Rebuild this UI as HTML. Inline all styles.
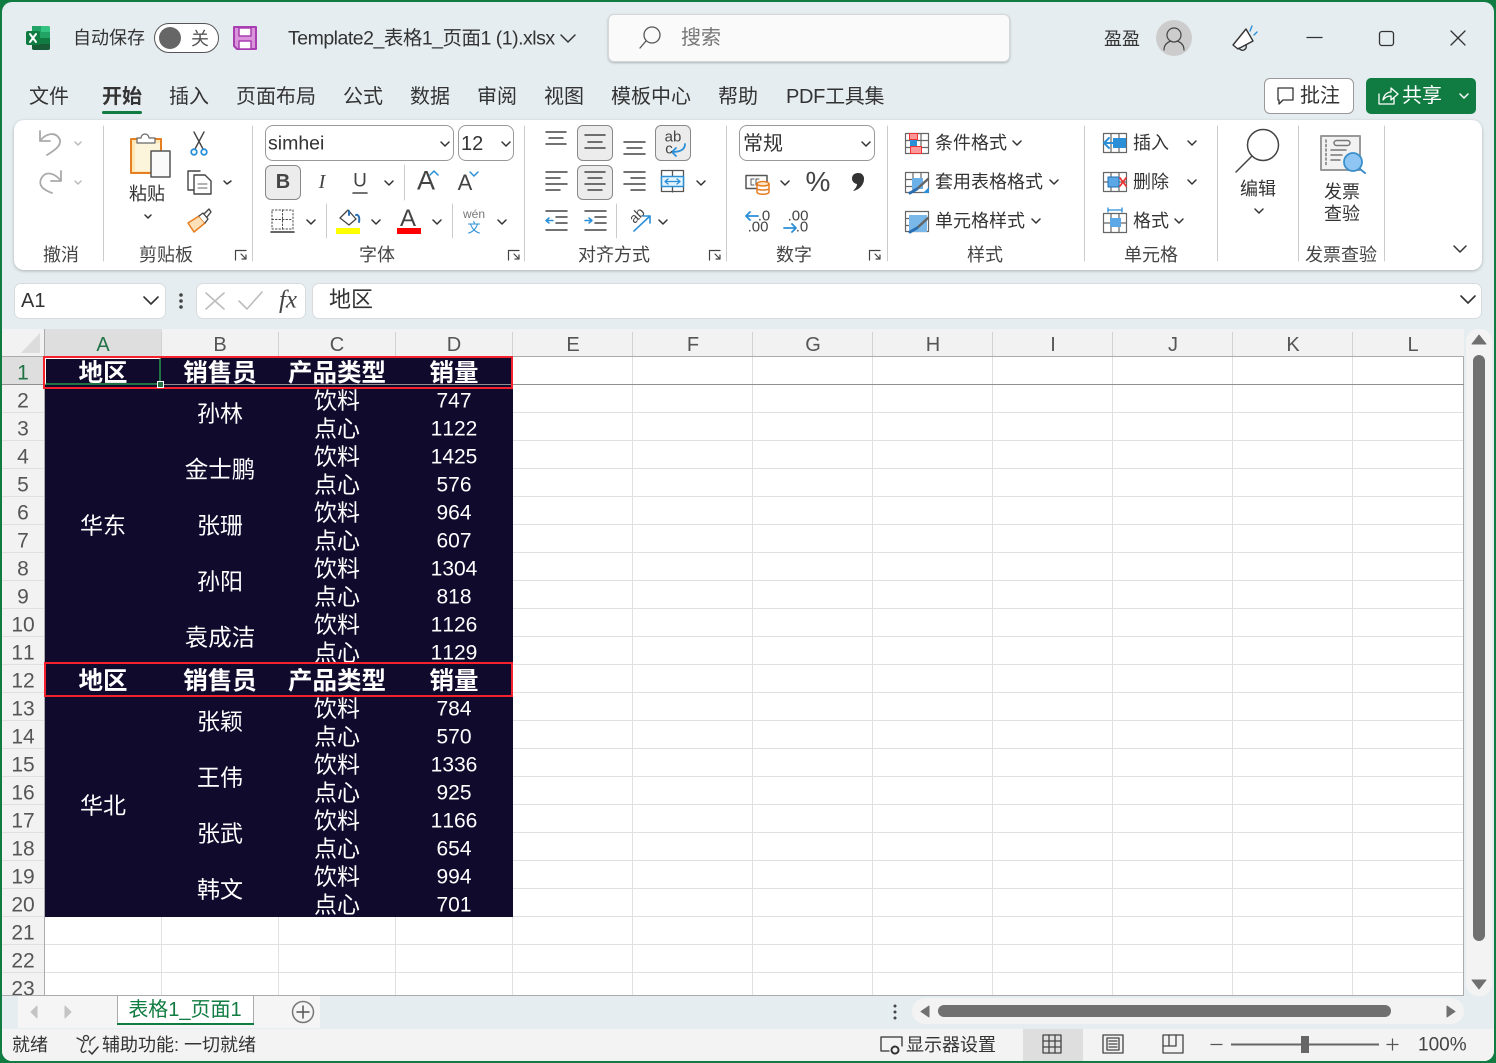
<!DOCTYPE html>
<html lang="zh"><head><meta charset="utf-8"><title>Excel</title>
<style>
html,body{margin:0;padding:0;width:1496px;height:1063px;overflow:hidden;background:#107c41}
body{position:relative;font-family:"Liberation Sans","Noto Sans CJK SC",sans-serif;color:#333}
#win{position:absolute;left:2px;top:2px;width:1492px;height:1059px;background:#e5edf0;border-radius:10px;overflow:hidden}
.abs{position:absolute}
#ov{position:absolute;left:0;top:0;width:1496px;height:1063px}
.t,.c{position:absolute;white-space:nowrap;line-height:1;font-size:18px;margin-top:1px;z-index:2}
.t{transform:translateY(-50%)}
.c{transform:translate(-50%,-50%)}
.w{color:#fff;font-size:23px}
.b{color:#fff;font-size:24.500px;font-weight:bold}
.r{font-size:21px;color:#555;font-kerning:none}
.h{font-size:20px;color:#555}
.tab{font-size:20px;color:#333}
.g{font-size:18px;color:#444}
.n{font-size:21px;color:#fff;font-kerning:none}
.z1{z-index:0}
</style></head><body>
<div id="win"></div>

<!-- ribbon and boxes -->
<div class="abs" style="left:14px;top:120px;width:1468px;height:150px;background:#fff;border-radius:10px;box-shadow:0 1px 3px rgba(0,0,0,.25)"></div>
<div class="abs" style="left:608px;top:14px;width:400px;height:46px;background:#fafafa;border:1px solid #d5d8da;border-radius:6px;box-shadow:0 1px 2px rgba(0,0,0,.25)"></div>
<div class="abs" style="left:1264px;top:78px;width:88px;height:34px;background:#fff;border:1px solid #999;border-radius:6px"></div>
<div class="abs" style="left:1366px;top:78px;width:110px;height:36px;background:#107c41;border-radius:5px"></div>
<div class="abs" style="left:102px;top:111px;width:40px;height:3px;background:#107c41;border-radius:2px"></div>
<div class="abs" style="left:14px;top:283px;width:150px;height:34px;background:#fff;border:1px solid #d8dcde;border-radius:7px"></div>
<div class="abs" style="left:196px;top:283px;width:108px;height:34px;background:#fff;border:1px solid #d8dcde;border-radius:7px"></div>
<div class="abs" style="left:312px;top:283px;width:1168px;height:34px;background:#fff;border:1px solid #d8dcde;border-radius:7px"></div>
<div class="abs" style="left:265px;top:125px;width:187px;height:34px;background:#fff;border:1px solid #999;border-radius:8px"></div>
<div class="abs" style="left:458px;top:125px;width:54px;height:34px;background:#fff;border:1px solid #999;border-radius:8px"></div>
<div class="abs" style="left:739px;top:125px;width:134px;height:34px;background:#fff;border:1px solid #999;border-radius:8px"></div>
<div class="abs" style="left:265px;top:165px;width:34px;height:33px;background:#ececec;border:1px solid #888;border-radius:6px"></div>
<div class="abs" style="left:577px;top:125px;width:34px;height:34px;background:#ececec;border:1px solid #888;border-radius:6px"></div>
<div class="abs" style="left:655px;top:125px;width:34px;height:34px;background:#ececec;border:1px solid #888;border-radius:6px"></div>
<div class="abs" style="left:577px;top:165px;width:34px;height:33px;background:#ececec;border:1px solid #888;border-radius:6px"></div>

<!-- sheet base -->
<div class="abs" style="left:2px;top:329px;width:1462px;height:28px;background:#f2f2f2"></div>
<div class="abs" style="left:2px;top:357px;width:43px;height:640px;background:#f2f2f2"></div>
<div class="abs" style="left:45px;top:329px;width:117px;height:28px;background:#dedede"></div>
<div class="abs" style="left:2px;top:357px;width:43px;height:28px;background:#dedede"></div>
<div class="abs" style="left:45px;top:357px;width:1418px;height:640px;background:#fff"></div>
<div class="abs" style="left:1466px;top:329px;width:26px;height:667px;background:#f3f3f3;border-radius:12px"></div>

<svg class="abs" style="left:0;top:0" width="1496" height="1063" fill="none">
<g stroke="#e0e0e0" stroke-width="1">
<path d="M161.500 357V995M278.500 357V995M395.500 357V995M512.500 357V995M632.500 357V995M752.500 357V995M872.500 357V995M992.500 357V995M1112.500 357V995M1232.500 357V995M1352.500 357V995"/>
<path d="M2 412.500H1463M2 440.500H1463M2 468.500H1463M2 496.500H1463M2 524.500H1463M2 552.500H1463M2 580.500H1463M2 608.500H1463M2 636.500H1463M2 664.500H1463M2 692.500H1463M2 720.500H1463M2 748.500H1463M2 776.500H1463M2 804.500H1463M2 832.500H1463M2 860.500H1463M2 888.500H1463M2 916.500H1463M2 944.500H1463M2 972.500H1463"/>
<path d="M161.500 332V356M278.500 332V356M395.500 332V356M512.500 332V356M632.500 332V356M752.500 332V356M872.500 332V356M992.500 332V356M1112.500 332V356M1232.500 332V356M1352.500 332V356" stroke="#d2d2d2"/>
</g>
<path d="M44.500 329V995M2 356.500H1463.500V995" stroke="#ababab"/>
<path d="M40 333V353H21Z" fill="#dcdcdc"/>
</svg>

<!-- dark data -->
<div class="abs" style="left:45px;top:357px;width:468px;height:560px;background:#100a2d"></div>
<div class="abs" style="left:2px;top:384px;width:1462px;height:1px;background:#8f8f8f"></div>

<!-- col letters -->
<div class="c h" style="left:103px;top:344px;color:#217346">A</div>
<div class="c h" style="left:220px;top:344px">B</div>
<div class="c h" style="left:337px;top:344px">C</div>
<div class="c h" style="left:454px;top:344px">D</div>
<div class="c h" style="left:573px;top:344px">E</div>
<div class="c h" style="left:693px;top:344px">F</div>
<div class="c h" style="left:813px;top:344px">G</div>
<div class="c h" style="left:933px;top:344px">H</div>
<div class="c h" style="left:1053px;top:344px">I</div>
<div class="c h" style="left:1173px;top:344px">J</div>
<div class="c h" style="left:1293px;top:344px">K</div>
<div class="c h" style="left:1413px;top:344px">L</div>

<!-- row numbers -->
<div class="c r" style="left:23px;top:372px;color:#217346">1</div>
<div class="c r" style="left:23px;top:400px">2</div>
<div class="c r" style="left:23px;top:428px">3</div>
<div class="c r" style="left:23px;top:456px">4</div>
<div class="c r" style="left:23px;top:484px">5</div>
<div class="c r" style="left:23px;top:512px">6</div>
<div class="c r" style="left:23px;top:540px">7</div>
<div class="c r" style="left:23px;top:568px">8</div>
<div class="c r" style="left:23px;top:596px">9</div>
<div class="c r" style="left:23px;top:624px">10</div>
<div class="c r" style="left:23px;top:652px">11</div>
<div class="c r" style="left:23px;top:680px">12</div>
<div class="c r" style="left:23px;top:708px">13</div>
<div class="c r" style="left:23px;top:736px">14</div>
<div class="c r" style="left:23px;top:764px">15</div>
<div class="c r" style="left:23px;top:792px">16</div>
<div class="c r" style="left:23px;top:820px">17</div>
<div class="c r" style="left:23px;top:848px">18</div>
<div class="c r" style="left:23px;top:876px">19</div>
<div class="c r" style="left:23px;top:904px">20</div>
<div class="c r" style="left:23px;top:932px">21</div>
<div class="c r" style="left:23px;top:960px">22</div>
<div class="c r z1" style="left:23px;top:988px">23</div>

<!-- merged cells -->
<div class="c w" style="left:103px;top:525px">华东</div>
<div class="c w" style="left:103px;top:805px">华北</div>
<div class="c w" style="left:220px;top:413px">孙林</div>
<div class="c w" style="left:220px;top:469px;font-size:23.500px">金士鹏</div>
<div class="c w" style="left:220px;top:525px">张珊</div>
<div class="c w" style="left:220px;top:581px">孙阳</div>
<div class="c w" style="left:220px;top:637px;font-size:23.500px">袁成洁</div>
<div class="c w" style="left:220px;top:721px">张颖</div>
<div class="c w" style="left:220px;top:777px">王伟</div>
<div class="c w" style="left:220px;top:833px">张武</div>
<div class="c w" style="left:220px;top:889px">韩文</div>

<!-- C/D -->
<div class="c w" style="left:337px;top:400px">饮料</div><div class="c n" style="left:454px;top:400px">747</div>
<div class="c w" style="left:337px;top:428px">点心</div><div class="c n" style="left:454px;top:428px">1122</div>
<div class="c w" style="left:337px;top:456px">饮料</div><div class="c n" style="left:454px;top:456px">1425</div>
<div class="c w" style="left:337px;top:484px">点心</div><div class="c n" style="left:454px;top:484px">576</div>
<div class="c w" style="left:337px;top:512px">饮料</div><div class="c n" style="left:454px;top:512px">964</div>
<div class="c w" style="left:337px;top:540px">点心</div><div class="c n" style="left:454px;top:540px">607</div>
<div class="c w" style="left:337px;top:568px">饮料</div><div class="c n" style="left:454px;top:568px">1304</div>
<div class="c w" style="left:337px;top:596px">点心</div><div class="c n" style="left:454px;top:596px">818</div>
<div class="c w" style="left:337px;top:624px">饮料</div><div class="c n" style="left:454px;top:624px">1126</div>
<div class="c w z1" style="left:337px;top:652px">点心</div><div class="c n" style="left:454px;top:652px">1129</div>
<div class="c w" style="left:337px;top:708px">饮料</div><div class="c n" style="left:454px;top:708px">784</div>
<div class="c w" style="left:337px;top:736px">点心</div><div class="c n" style="left:454px;top:736px">570</div>
<div class="c w" style="left:337px;top:764px">饮料</div><div class="c n" style="left:454px;top:764px">1336</div>
<div class="c w" style="left:337px;top:792px">点心</div><div class="c n" style="left:454px;top:792px">925</div>
<div class="c w" style="left:337px;top:820px">饮料</div><div class="c n" style="left:454px;top:820px">1166</div>
<div class="c w" style="left:337px;top:848px">点心</div><div class="c n" style="left:454px;top:848px">654</div>
<div class="c w" style="left:337px;top:876px">饮料</div><div class="c n" style="left:454px;top:876px">994</div>
<div class="c w" style="left:337px;top:904px">点心</div><div class="c n" style="left:454px;top:904px">701</div>

<!-- row 12 band covers clipped text -->
<div class="abs" style="left:44px;top:662px;width:469px;height:35px;background:#100a2d;box-sizing:border-box;border:2px solid #f5222d;z-index:1"></div>
<div class="abs" style="left:45px;top:358px;width:116px;height:27px;box-sizing:border-box;border:1px solid #fff;border-right:2px solid #217346;border-bottom:2px solid #217346"></div>
<div class="abs" style="left:43px;top:356px;width:470px;height:33px;box-sizing:border-box;border:2px solid #f5222d"></div>
<div class="abs" style="left:157px;top:381px;width:7px;height:7px;background:#217346;border:1px solid #fff;box-sizing:border-box"></div>

<div class="c b" style="left:103px;top:373px">地区</div>
<div class="c b" style="left:220px;top:373px">销售员</div>
<div class="c b" style="left:337px;top:373px">产品类型</div>
<div class="c b" style="left:454px;top:373px">销量</div>
<div class="c b" style="left:103px;top:681px">地区</div>
<div class="c b" style="left:220px;top:681px">销售员</div>
<div class="c b" style="left:337px;top:681px">产品类型</div>
<div class="c b" style="left:454px;top:681px">销量</div>

<!-- sheet tab bar / status -->
<div class="abs" style="left:2px;top:996px;width:1492px;height:33px;background:#e5edf0;z-index:1"></div>
<div class="abs" style="left:2px;top:995px;width:1462px;height:1px;background:#ababab;z-index:1"></div>
<div class="abs" style="left:18px;top:996px;width:302px;height:32px;background:#f5f5f5;z-index:1"></div>
<div class="abs" style="left:117px;top:995px;width:137px;height:28px;background:#fff;box-sizing:border-box;border:1px solid #ababab;border-bottom:0;z-index:1"></div>
<div class="abs" style="left:117px;top:1023px;width:137px;height:2px;background:#107c41;z-index:1"></div>
<div class="c" style="left:185px;top:1009px;font-size:20px;color:#107c41">表格1_页面1</div>
<div class="abs" style="left:912px;top:998px;width:552px;height:26px;background:#f3f3f3;border-radius:13px;z-index:1"></div>
<div class="abs" style="left:938px;top:1005px;width:453px;height:12px;background:#707070;border-radius:6px;z-index:1"></div>
<div class="abs" style="left:1473px;top:355px;width:12px;height:586px;background:#707070;border-radius:6px"></div>
<div class="abs" style="left:2px;top:1029px;width:1492px;height:32px;background:#f3f3f3;border-radius:0 0 10px 10px;z-index:1"></div>
<div class="abs" style="left:1023px;top:1029px;width:60px;height:32px;background:#dedede;z-index:1"></div>

<div class="t" style="left:12px;top:1044px;font-size:18px">就绪</div>
<div class="t" style="left:102px;top:1044px;font-size:18px">辅助功能: 一切就绪</div>
<div class="t" style="left:906px;top:1044px;font-size:18px">显示器设置</div>
<div class="t" style="left:1418px;top:1044px;font-size:19px;color:#444">100%</div>

<!-- title text -->
<div class="t" style="left:73px;top:37px">自动保存</div>
<div class="c" style="left:200px;top:38px;font-size:18px;color:#555">关</div>
<div class="t" style="left:288px;top:38px;font-size:19.500px;letter-spacing:-.5px">Template2_表格1_页面1 (1).xlsx</div>
<div class="t" style="left:681px;top:37px;font-size:20px;color:#777">搜索</div>
<div class="t" style="left:1104px;top:38px;font-size:18px">盈盈</div>

<!-- tabs -->
<div class="t tab" style="left:29px;top:96px">文件</div>
<div class="t tab" style="left:102px;top:96px;font-weight:bold">开始</div>
<div class="t tab" style="left:169px;top:96px">插入</div>
<div class="t tab" style="left:236px;top:96px">页面布局</div>
<div class="t tab" style="left:343px;top:96px">公式</div>
<div class="t tab" style="left:410px;top:96px">数据</div>
<div class="t tab" style="left:477px;top:96px">审阅</div>
<div class="t tab" style="left:544px;top:96px">视图</div>
<div class="t tab" style="left:611px;top:96px">模板中心</div>
<div class="t tab" style="left:718px;top:96px">帮助</div>
<div class="t tab" style="left:786px;top:96px;letter-spacing:-.3px">PDF工具集</div>
<div class="t" style="left:1300px;top:95px;font-size:20px">批注</div>
<div class="t" style="left:1402px;top:95px;font-size:20px;color:#fff">共享</div>

<!-- ribbon text -->
<div class="c" style="left:147px;top:193px">粘贴</div>
<div class="t" style="left:268px;top:143px;font-size:19.500px">simhei</div>
<div class="t" style="left:461px;top:143px;font-size:20px">12</div>
<div class="c" style="left:283px;top:181px;font-size:20px;font-weight:bold;color:#444">B</div>
<div class="c" style="left:322px;top:181px;font-size:20px;font-style:italic;font-family:'Liberation Serif',serif;color:#444">I</div>
<div class="c" style="left:360px;top:180px;font-size:19px;color:#444">U</div>
<div class="c" style="left:426px;top:180px;font-size:27px;color:#444">A</div>
<div class="c" style="left:465px;top:182px;font-size:22px;color:#444">A</div>
<div class="c" style="left:408px;top:218px;font-size:24px;color:#444">A</div>
<div class="c" style="left:474px;top:213px;font-size:12px;color:#777">wén</div>
<div class="c" style="left:474px;top:227px;font-size:13px;color:#2b8fd8">文</div>
<div class="c" style="left:673px;top:136px;font-size:15px;color:#444">ab</div>
<div class="c" style="left:669px;top:148px;font-size:15px;color:#444">c</div>
<div class="t" style="left:743px;top:143px;font-size:20px">常规</div>
<div class="c" style="left:818px;top:181px;font-size:28px;color:#444">%</div>
<div class="c" style="left:764px;top:215px;font-size:15px;color:#444">.0</div>
<div class="c" style="left:758px;top:226px;font-size:15px;color:#444">.00</div>
<div class="c" style="left:798px;top:215px;font-size:15px;color:#444">.00</div>
<div class="c" style="left:802px;top:226px;font-size:15px;color:#444">.0</div>
<div class="t" style="left:935px;top:142px">条件格式</div>
<div class="t" style="left:935px;top:181px">套用表格格式</div>
<div class="t" style="left:935px;top:220px">单元格样式</div>
<div class="t" style="left:1133px;top:142px">插入</div>
<div class="t" style="left:1133px;top:181px">删除</div>
<div class="t" style="left:1133px;top:220px">格式</div>
<div class="c" style="left:1258px;top:188px">编辑</div>
<div class="c" style="left:1342px;top:191px">发票</div>
<div class="c" style="left:1342px;top:213px">查验</div>
<div class="c g" style="left:61px;top:254px">撤消</div>
<div class="c g" style="left:166px;top:254px">剪贴板</div>
<div class="c g" style="left:377px;top:254px">字体</div>
<div class="c g" style="left:614px;top:254px">对齐方式</div>
<div class="c g" style="left:794px;top:254px">数字</div>
<div class="c g" style="left:985px;top:254px">样式</div>
<div class="c g" style="left:1151px;top:254px">单元格</div>
<div class="c g" style="left:1341px;top:254px">发票查验</div>

<!-- formula bar -->
<div class="t" style="left:21px;top:300px;font-size:20px">A1</div>
<div class="t" style="left:329px;top:299px;font-size:22px">地区</div>
<div class="c" style="left:288px;top:299px;font-size:25px;font-style:italic;font-family:'Liberation Serif',serif;color:#444">fx</div>

<svg id="ov" fill="none" stroke-linecap="round" stroke-linejoin="round" style="z-index:1">
<!-- excel logo -->
<path d="M32 26H48a2 2 0 0 1 2 2V48a2 2 0 0 1-2 2H34a2 2 0 0 1-2-2Z" fill="#21a366" stroke="none"/>
<path d="M41 26H48a2 2 0 0 1 2 2V32H41Z" fill="#33c481" stroke="none"/>
<path d="M32 38H50V44H32Z" fill="#107c41" stroke="none"/>
<path d="M32 44H50V48a2 2 0 0 1-2 2H34a2 2 0 0 1-2-2Z" fill="#185c37" stroke="none"/>
<rect x="26" y="31" width="14" height="14" rx="2" fill="#107c41"/>
<path d="M30 34L36 42M36 34L30 42" stroke="#fff" stroke-width="2"/>
<!-- toggle -->
<rect x="154.500" y="23.500" width="64" height="29" rx="14.500" fill="#fff" stroke="#555" stroke-width="1"/>
<circle cx="170" cy="38" r="11" fill="#666"/>
<!-- save -->
<path d="M234 27H256V49H237L234 46Z" fill="#d994dc" stroke="#a83fb0" stroke-width="2"/>
<rect x="239" y="28" width="12" height="8" fill="#fff" stroke="#a83fb0" stroke-width="1.500"/>
<rect x="239" y="41" width="12" height="8" fill="#fff" stroke="#a83fb0" stroke-width="1.500"/>
<path d="M561 35L568 42L575 35" stroke="#333" stroke-width="1.500"/>
<!-- search icon -->
<circle cx="652" cy="35" r="8" stroke="#555" stroke-width="1.300"/>
<path d="M646 41L640 48" stroke="#555" stroke-width="1.300"/>
<!-- avatar -->
<circle cx="1174" cy="38" r="18" fill="#ccc"/>
<circle cx="1174" cy="35" r="7" stroke="#444" stroke-width="1.200"/>
<path d="M1164 50C1164 44 1168 42 1171 41M1184 50C1184 44 1180 42 1177 41" stroke="#444" stroke-width="1.200"/>
<!-- megaphone -->
<path d="M1246 29L1253 41L1238 49L1233 45Z" fill="#fff" stroke="#333" stroke-width="1.400"/>
<path d="M1239 48A3.500 3.500 0 0 0 1246 45" stroke="#333" stroke-width="1.400"/>
<path d="M1250 31L1252 26M1254 35L1257 32" stroke="#2b8fd8" stroke-width="1.400"/>
<!-- window controls -->
<path d="M1307 37.500H1322" stroke="#333" stroke-width="1.300"/>
<rect x="1379.500" y="31.500" width="14" height="14" rx="2.500" stroke="#333" stroke-width="1.300"/>
<path d="M1451 31L1465 45M1465 31L1451 45" stroke="#333" stroke-width="1.300"/>
<!-- comment / share -->
<path d="M1278 88H1293V100H1283L1279 104V100H1278Z" stroke="#333" stroke-width="1.300"/>
<path d="M1379 94V104H1394V98M1383 100C1384 94 1388 92 1391 92V88L1398 94L1391 100V96C1388 96 1385 97 1383 100Z" stroke="#fff" stroke-width="1.300"/>
<path d="M1460 94L1464 98L1468 94" stroke="#fff" stroke-width="1.500"/>

<!-- separators -->
<path d="M103.500 126V261M252.500 126V261M524.500 126V261M726.500 126V261M887.500 126V261M1084.500 126V261M1217.500 126V261M1298.500 126V261M1384.500 126V261M404.500 165V200M326.500 204V238M452.500 204V238M616.500 204V238" stroke="#ccc" stroke-width="1"/>

<!-- undo/redo -->
<path d="M40 131V141H50M40 141C46 133 56 131 60 140C61 146 55 150 47 155" stroke="#aaa" stroke-width="1.800"/>
<path d="M61 171V181H51M61 181C55 173 45 170 41 179C38 186 44 190 52 193" stroke="#aaa" stroke-width="1.800"/>
<path d="M75 142L78 145L81 142M75 181L78 184L81 181" stroke="#bbb" stroke-width="1.500"/>

<!-- paste -->
<rect x="131" y="139" width="30" height="34" fill="#fde7b4" stroke="#e67e22" stroke-width="2"/>
<rect x="135" y="143" width="25" height="28" fill="#fdf4dc"/>
<path d="M137 138H141A4 4 0 0 1 149 138H155V143H137Z" fill="#fff" stroke="#666" stroke-width="1.200"/>
<rect x="151" y="151" width="19" height="26" fill="#fafafa" stroke="#555" stroke-width="1.500"/>
<path d="M145 215L148 218L151 215" stroke="#333" stroke-width="1.500"/>
<!-- scissors -->
<path d="M194 132L203 149M204 132L195 149" stroke="#444" stroke-width="1.400"/>
<circle cx="194" cy="152" r="2.800" stroke="#2b8fd8" stroke-width="1.800"/>
<circle cx="204" cy="152" r="2.800" stroke="#2b8fd8" stroke-width="1.800"/>
<!-- copy -->
<path d="M194 190H188V171H200" stroke="#444" stroke-width="1.400"/>
<path d="M194 175H205L211 181V194H194Z" fill="#fff" stroke="#444" stroke-width="1.400"/>
<path d="M198 184H207M198 188H207" stroke="#666"/>
<path d="M224 181L227 184L231 181" stroke="#333" stroke-width="1.500"/>
<!-- painter -->
<path d="M188 223L199 216L205 223L194 232Z" fill="#fde0b8" stroke="#e67e22" stroke-width="1.500"/>
<path d="M199 216L203 213L208 219L205 223" fill="#fff" stroke="#444" stroke-width="1.300"/>
<path d="M204 214L209 209L211 212L207 217" stroke="#444" stroke-width="1.400"/>

<!-- selects chevrons -->
<path d="M441 142L445 146L449 142M502 142L506 146L510 142M862 142L866 146L870 142" stroke="#333" stroke-width="1.500"/>
<!-- font row 2 -->
<path d="M353 193H367" stroke="#444" stroke-width="1.500"/>
<path d="M385 181L389 185L393 181" stroke="#333" stroke-width="1.500"/>
<path d="M430 175L434 171L438 175M470 172L474 176L478 172" stroke="#2b8fd8" stroke-width="1.500"/>
<!-- border -->
<rect x="272" y="210" width="21" height="19" stroke="#444" stroke-dasharray="1.500 2"/>
<path d="M282.500 210V229M272 219.500H293" stroke="#444" stroke-dasharray="1.500 2"/>
<path d="M271 232H294" stroke="#333" stroke-width="1.500"/>
<path d="M307 220L311 224L315 220M372 220L376 224L380 220M433 220L437 224L441 220M498 220L502 224L506 220" stroke="#333" stroke-width="1.500"/>
<!-- fill -->
<path d="M340 218L348 210L356 219L349 225Z" stroke="#444" stroke-width="1.300"/>
<path d="M349 211V215M356 215C358 214 360 217 359 222" stroke="#2b6fb3" stroke-width="2"/>
<rect x="336" y="228" width="24" height="6" fill="#ff0" stroke="none"/>
<rect x="397" y="228" width="24" height="6" fill="#f00" stroke="none"/>

<!-- align -->
<g stroke="#444" stroke-width="1.500">
<path d="M546 132H566M549 138H563M546 144H566"/>
<path d="M585 135H605M588 142H602M585 148H605" />
<path d="M624 142H645M627 148H642M624 154H645"/>
<path d="M546 172H567M546 178H560M546 184H567M546 190H560"/>
<path d="M585 172H605M588 178H602M585 184H605M588 190H602"/>
<path d="M624 172H645M631 178H645M624 184H645M631 190H645"/>
<path d="M546 211H567M556 217H567M556 223H567M546 230H567"/>
<path d="M585 211H606M595 217H606M595 223H606M585 230H606"/>
</g>
<path d="M546 220.500H553M549 218L546 220.500L549 223M585 220.500H592M589 218L592 220.500L589 223" stroke="#2b8fd8" stroke-width="1.500"/>
<path d="M685 144C685 150 680 152 672 152M676 148L672 152L676 156" stroke="#2b8fd8" stroke-width="1.800"/>
<rect x="661.500" y="170.500" width="22" height="21" stroke="#555" stroke-width="1.300"/>
<path d="M672.500 171V176M672.500 187V192" stroke="#555" stroke-width="1.300"/>
<rect x="661.500" y="176.500" width="22" height="10" fill="#e4f2fb" stroke="#2b8fd8" stroke-width="1.500"/>
<path d="M665 181.500H680M668 179L665 181.500L668 184M677 179L680 181.500L677 184" stroke="#2b8fd8" stroke-width="1.300"/>
<path d="M697 181L701 185L705 181M659 220L663 224L667 220" stroke="#333" stroke-width="1.500"/>
<path d="M634 231L650 216M643 216H650V223" stroke="#2b8fd8" stroke-width="1.600"/>
<text x="630" y="221" transform="rotate(-45 636 217)" font-family="Liberation Sans" font-size="14" fill="#444" stroke="none">ab</text>

<!-- number -->
<rect x="746" y="175.500" width="21" height="13" stroke="#555" stroke-width="1.500"/>
<path d="M754 179H751V185H754M759 179H756V185H759" stroke="#555"/>
<ellipse cx="763" cy="184" rx="6" ry="2.500" fill="#fde7c8" stroke="#e67e22" stroke-width="1.500"/>
<path d="M757 184V192C757 195 769 195 769 192V184C769 186.500 757 186.500 757 184M757 188.500C757 190.500 769 190.500 769 188.500" fill="#fff" stroke="#e67e22" stroke-width="1.500"/>
<path d="M781 181L785 185L789 181" stroke="#333" stroke-width="1.500"/>
<path d="M746 216H758M750 212L746 216L750 220M784 228H796M792 224L796 228L792 232" stroke="#2b8fd8" stroke-width="1.800"/>
<path d="M858 173A5.500 5.500 0 0 1 864 179C864 185 859 190 853 191C856 188 857 186 857 184A5.500 5.500 0 0 1 858 173Z" fill="#333"/>

<!-- styles -->
<g stroke="#666" stroke-width="1.200" stroke-linecap="butt">
<rect x="905.500" y="133.500" width="23" height="20" fill="#fff"/>
<path d="M905 140.500H929M905 147.500H929M913 133V154M921 133V154"/>
<rect x="905.500" y="172.500" width="23" height="20" fill="#fff"/>
<path d="M905 179.500H912M905 186.500H912M913 172V193M921 172V178"/>
<rect x="905.500" y="211.500" width="23" height="20" fill="#fff"/>
<path d="M905 218.500H909M905 225.500H909"/>
</g>
<rect x="909.500" y="133.500" width="8" height="6" fill="#f99" stroke="#e33"/>
<rect x="910" y="140" width="7" height="6" fill="#2b8fd8"/>
<rect x="910.500" y="146.500" width="11" height="7" fill="#f99" stroke="#e33"/>
<path d="M912 178H923V189H912Z" fill="#6cb0e8" stroke="none"/>
<path d="M923 193L929 187V193Z" fill="#2b8fd8" stroke="none"/>
<path d="M909 215H927V232H909Z" fill="#7ab8ea" stroke="none"/>
<path d="M917 189L928 179M917 228L928 218" stroke="#666" stroke-width="2.500"/>
<path d="M910 193L917 189M910 232L917 228" stroke="#2b6fb3" stroke-width="3"/>
<path d="M1013 141L1017 145L1021 141M1050 180L1054 184L1058 180M1032 219L1036 223L1040 219" stroke="#333" stroke-width="1.500"/>

<!-- cells -->
<g stroke="#666" stroke-width="1.200" stroke-linecap="butt">
<rect x="1103.500" y="133.500" width="23" height="19" fill="#fff"/>
<path d="M1103 143H1127M1111 133V153M1119 133V153"/>
<rect x="1103.500" y="172.500" width="23" height="19" fill="#fff"/>
<path d="M1103 182H1127M1111 172V192M1119 172V192"/>
<rect x="1103.500" y="213.500" width="23" height="19" fill="#fff"/>
<path d="M1103 223H1127M1111 213V233M1119 213V233"/>
</g>
<rect x="1113" y="138" width="13" height="10" fill="#2b8fd8" stroke="none"/>
<path d="M1105 143H1115M1109 138L1104 143L1109 148" stroke="#2b8fd8" stroke-width="2"/>
<rect x="1108" y="177" width="11" height="10" fill="#5ca8e6" stroke="#1d6fb5"/>
<path d="M1120 178L1126 186M1126 178L1120 186" stroke="#e33" stroke-width="1.800"/>
<rect x="1110" y="218" width="11" height="9" fill="#5ca8e6" stroke="none"/>
<path d="M1108 210H1122M1108 208V212M1122 208V212" stroke="#2b8fd8" stroke-width="1.300"/>
<path d="M1188 141L1192 145L1196 141M1188 180L1192 184L1196 180M1175 219L1179 223L1183 219" stroke="#333" stroke-width="1.500"/>

<!-- editing -->
<circle cx="1263" cy="145" r="15.500" stroke="#444" stroke-width="1.500"/>
<path d="M1252 156L1236 172" stroke="#444" stroke-width="1.500"/>
<path d="M1255 209L1259 213L1263 209" stroke="#333" stroke-width="1.500"/>

<!-- invoice -->
<rect x="1321" y="136" width="39" height="34" fill="#f2f2f2" stroke="#999" stroke-width="2"/>
<path d="M1326 140V166" stroke="#777" stroke-width="1.500" stroke-dasharray="2 2.500"/>
<rect x="1334" y="140.500" width="16" height="5" rx="2.500" stroke="#777" stroke-width="1.500"/>
<path d="M1331 150H1346M1331 155H1342M1331 160H1340" stroke="#777" stroke-width="1.500"/>
<circle cx="1353" cy="162" r="9" fill="#8fc5f2" stroke="#3a8fcb" stroke-width="1.800"/>
<path d="M1360 169L1365 173" stroke="#3a8fcb" stroke-width="2"/>
<path d="M1454 246L1460 252L1466 246" stroke="#333" stroke-width="1.500"/>

<!-- launchers -->
<g stroke="#444" stroke-width="1.200">
<path d="M235.500 260V250.500H246M241 254L246 259M246 255V259H242"/>
<path d="M508.500 260V250.500H519M514 254L519 259M519 255V259H515"/>
<path d="M709.500 260V250.500H720M715 254L720 259M720 255V259H716"/>
<path d="M869.500 260V250.500H880M875 254L880 259M880 255V259H876"/>
</g>

<!-- formula icons -->
<path d="M144 297L151 304L158 297" stroke="#333" stroke-width="1.600"/>
<circle cx="181" cy="295" r="1.300" fill="#444" stroke="#444"/>
<circle cx="181" cy="301" r="1.300" fill="#444" stroke="#444"/>
<circle cx="181" cy="307" r="1.300" fill="#444" stroke="#444"/>
<path d="M206 293L224 309M224 293L206 309M239 301L247 309L262 292" stroke="#bdbdbd" stroke-width="1.600"/>
<path d="M1461 296L1468 303L1475 296" stroke="#333" stroke-width="1.600"/>

<!-- sheet nav -->
<path d="M37 1006L31 1012L37 1018Z" fill="#c4c4c4" stroke="#c4c4c4"/>
<path d="M65 1006L71 1012L65 1018Z" fill="#c4c4c4" stroke="#c4c4c4"/>
<circle cx="303" cy="1012" r="10.500" stroke="#777" stroke-width="1.500"/>
<path d="M297 1012H309M303 1006V1018" stroke="#555" stroke-width="1.500"/>
<circle cx="895" cy="1006" r="1" fill="#444" stroke="#444"/>
<circle cx="895" cy="1012" r="1" fill="#444" stroke="#444"/>
<circle cx="895" cy="1018" r="1" fill="#444" stroke="#444"/>
<path d="M929 1006L921 1011.500L929 1017Z" fill="#707070" stroke="#707070"/>
<path d="M1447 1006L1455 1011.500L1447 1017Z" fill="#707070" stroke="#707070"/>
<path d="M1479 335L1472 344H1486Z" fill="#707070" stroke="#707070"/>
<path d="M1479 989L1472 980H1486Z" fill="#707070" stroke="#707070"/>

<!-- status icons -->
<circle cx="86" cy="1038" r="2.500" stroke="#333" stroke-width="1.300"/>
<path d="M77 1038L83 1041M90 1041L95 1037M84 1042L81 1050C82 1054 84 1052 86 1051M90 1041V1045" stroke="#333" stroke-width="1.300"/>
<path d="M89 1051L92 1054L98 1047" stroke="#333" stroke-width="1.500"/>
<path d="M889 1051H881V1037H902V1046" stroke="#333" stroke-width="1.300"/>
<circle cx="895" cy="1050" r="3.500" stroke="#333" stroke-width="2" stroke-dasharray="2 1"/>
<g stroke="#444" stroke-width="1.300">
<rect x="1043" y="1035" width="18" height="18"/>
<path d="M1049 1035V1053M1055 1035V1053M1043 1041H1061M1043 1047H1061"/>
<rect x="1103" y="1035" width="20" height="18"/>
<rect x="1107" y="1038" width="12" height="12"/>
<path d="M1109 1041H1117M1109 1044H1117M1109 1047H1117"/>
<rect x="1163" y="1035" width="20" height="18"/>
<path d="M1163 1046H1176V1035M1169 1035V1046"/>
</g>
<path d="M1211 1044.500H1222M1387 1044.500H1398M1392.500 1039V1050" stroke="#555" stroke-width="1.200"/>
<path d="M1231 1044.500H1379" stroke="#666" stroke-width="2" stroke-linecap="butt"/>
<rect x="1301" y="1036" width="8" height="17" fill="#666" stroke="none"/>
</svg>
</body></html>
